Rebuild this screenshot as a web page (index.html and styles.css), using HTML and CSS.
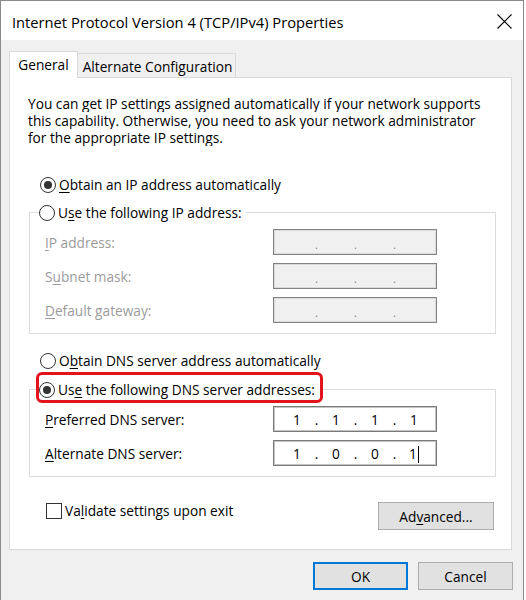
FILE: index.html
```html
<!DOCTYPE html>
<html lang="en">
<head>
    <meta charset="UTF-8">
    <meta name="viewport" content="width=device-width, initial-scale=1.0">
    <title>Internet Protocol Version 4 (TCP/IPv4) Properties</title>
    <link rel="stylesheet" href="styles.css">
</head>
<body>
    <div class="window">
        <div class="titlebar">
            <span class="title">Internet Protocol Version 4 (TCP/IPv4) Properties</span>
            <svg class="close" width="15" height="15" viewBox="0 0 15 15">
                <path d="M0.5 0.5L14.5 14.5M14.5 0.5L0.5 14.5" stroke="#000" stroke-width="1.1" fill="none"/>
            </svg>
        </div>

        <div class="client">
            <div class="tabs">
                <div class="tab active">General</div>
                <div class="tab">Alternate Configuration</div>
            </div>

            <div class="panel">
                <div class="intro">
                    <span class="line">You can get IP settings assigned automatically if your network supports</span>
                    <span class="line">this capability. Otherwise, you need to ask your network administrator</span>
                    <span class="line">for the appropriate IP settings.</span>
                </div>

                <div class="radio radio-ip">
                    <span class="dot on"></span>
                    <span><u>O</u>btain an IP address automatically</span>
                </div>

                <div class="group">
                    <div class="group-head radio">
                        <span class="dot"></span>
                        <span>U<u>s</u>e the following IP address:</span>
                    </div>
                    <div class="row disabled">
                        <span class="label"><u>I</u>P address:</span>
                        <div class="ip"><span class="oct"></span><span class="sep">.</span><span class="oct"></span><span class="sep">.</span><span class="oct"></span><span class="sep">.</span><span class="oct"></span></div>
                    </div>
                    <div class="row disabled">
                        <span class="label">S<u>u</u>bnet mask:</span>
                        <div class="ip"><span class="oct"></span><span class="sep">.</span><span class="oct"></span><span class="sep">.</span><span class="oct"></span><span class="sep">.</span><span class="oct"></span></div>
                    </div>
                    <div class="row disabled">
                        <span class="label"><u>D</u>efault gateway:</span>
                        <div class="ip"><span class="oct"></span><span class="sep">.</span><span class="oct"></span><span class="sep">.</span><span class="oct"></span><span class="sep">.</span><span class="oct"></span></div>
                    </div>
                </div>

                <div class="radio radio-dns">
                    <span class="dot"></span>
                    <span>O<u>b</u>tain DNS server address automatically</span>
                </div>

                <div class="group group-dns">
                    <div class="group-head radio">
                        <span class="dot on"></span>
                        <span>Us<u>e</u> the following DNS server addresses:</span>
                        <span class="highlight"></span>
                    </div>
                    <div class="row">
                        <span class="label"><u>P</u>referred DNS server:</span>
                        <div class="ip"><span class="oct">1</span><span class="sep">.</span><span class="oct">1</span><span class="sep">.</span><span class="oct">1</span><span class="sep">.</span><span class="oct">1</span></div>
                    </div>
                    <div class="row">
                        <span class="label"><u>A</u>lternate DNS server:</span>
                        <div class="ip"><span class="oct">1</span><span class="sep">.</span><span class="oct">0</span><span class="sep">.</span><span class="oct">0</span><span class="sep">.</span><span class="oct">1<span class="caret"></span></span></div>
                    </div>
                </div>

                <div class="panel-foot">
                    <div class="check">
                        <span class="box"></span>
                        <span>Va<u>l</u>idate settings upon exit</span>
                    </div>
                    <button class="btn btn-adv">Ad<u>v</u>anced...</button>
                </div>
            </div>

            <div class="buttons">
                <button class="btn btn-ok">OK</button>
                <button class="btn">Cancel</button>
            </div>
        </div>
    </div>
</body>
</html>
```

FILE: styles.css
```css
* {
    box-sizing: border-box;
}
body {
    margin: 0;
    background: #fff;
    font-family: "Segoe UI", "Open Sans", sans-serif;
    font-size: 13.7px;
    color: #000;
}
u {
    text-decoration-thickness: 1px;
    text-underline-offset: 2px;
}
.window {
    width: 524px;
    height: 600px;
    border: 1px solid #8a8a8a;
    border-bottom: none;
    background: #f0f0f0;
}
.titlebar {
    height: 39px;
    background: #fff;
    display: flex;
    align-items: center;
    justify-content: space-between;
    padding: 0 11px 0 11px;
}
.title {
    font-size: 14.7px;
    margin-top: 2px;
}
.close {
    margin-top: 2px;
}
.client {
    padding: 11px 0 0 8px;
}
.tabs {
    display: flex;
    align-items: flex-end;
    height: 26px;
}
.tab {
    height: 24px;
    border: 1px solid #d9d9d9;
    border-bottom: none;
    display: flex;
    align-items: center;
    justify-content: center;
    width: 158px;
    border-left: none;
    padding: 1px 0 0 2px;
}
.tab.active {
    height: 27px;
    width: 69px;
    margin-bottom: -1px;
    background: #fff;
    border-left: 1px solid #d9d9d9;
    position: relative;
    z-index: 1;
    padding: 0 0 1px 0;
}
.panel {
    width: 503px;
    height: 473px;
    background: #fff;
    border: 1px solid #d9d9d9;
    padding-top: 17px;
}
.intro {
    margin: 0 0 0 18px;
}
.line {
    display: block;
    height: 17px;
    line-height: 17px;
    overflow: hidden;
}
.radio {
    display: flex;
    align-items: center;
    gap: 3px;
    height: 17px;
}
.dot {
    width: 16px;
    height: 16px;
    border: 1px solid #333;
    border-radius: 50%;
    background: #fff;
    flex: none;
    position: relative;
}
.dot.on::after {
    content: "";
    position: absolute;
    top: 3px;
    left: 3px;
    width: 8px;
    height: 8px;
    border-radius: 50%;
    background: #333;
}
.radio-ip {
    margin: 30px 0 0 30px;
}
.radio-dns {
    margin: 18px 0 0 30px;
}
.group {
    margin: 19px 15px 0 19px;
    border: 1px solid #dcdcdc;
    padding-bottom: 10px;
}
.group-dns {
    margin-top: 20px;
}
.group-head {
    margin: -9px 0 0 9px;
    width: max-content;
    background: #fff;
    padding-right: 4px;
    position: relative;
}
.highlight {
    position: absolute;
    left: -3px;
    top: -9px;
    width: 287px;
    height: 31px;
    border: 3px solid #e3131e;
    border-radius: 6px;
}
.row {
    display: flex;
    align-items: center;
    margin: 8px 0 0 15px;
}
.group-dns .row:first-of-type {
    margin-top: 9px;
}
.label {
    width: 228px;
}
.ip {
    width: 164px;
    height: 26px;
    border: 1px solid #7a7a7a;
    box-shadow: inset 0 0 0 1px #c4c4c4;
    background: #fff;
    display: flex;
    align-items: center;
    padding-left: 8px;
}
.oct {
    width: 30px;
    text-align: center;
}
.sep {
    width: 9px;
    text-align: center;
}
.caret {
    display: inline-block;
    width: 1px;
    height: 17px;
    background: #000;
    vertical-align: -4px;
    margin-left: 1px;
}
.disabled .label {
    color: #9b9b9b;
}
.disabled .ip {
    background: #f0f0f0;
    border-color: #838383;
    box-shadow: inset 0 0 0 1px #dadada;
    color: #7c7c8c;
}
.disabled .sep {
    padding-top: 4px;
    font-size: 11px;
}
.panel-foot {
    display: flex;
    justify-content: space-between;
    align-items: flex-start;
    margin: 24px 17px 0 36px;
}
.check {
    display: flex;
    align-items: center;
    gap: 3px;
}
.box {
    width: 16px;
    height: 16px;
    border: 1px solid #333;
    background: #fff;
}
.btn {
    font-family: inherit;
    font-size: 13.7px;
    color: #000;
    background: #e1e1e1;
    border: 1px solid #adadad;
    padding: 0;
    width: 95px;
    height: 28px;
}
.btn-adv {
    width: 116px;
    height: 28px;
    margin-top: 1px;
}
.btn-ok {
    border: 2px solid #0078d7;
}
.buttons {
    display: flex;
    justify-content: flex-end;
    gap: 10px;
    width: 504px;
    margin-top: 12px;
}
```
